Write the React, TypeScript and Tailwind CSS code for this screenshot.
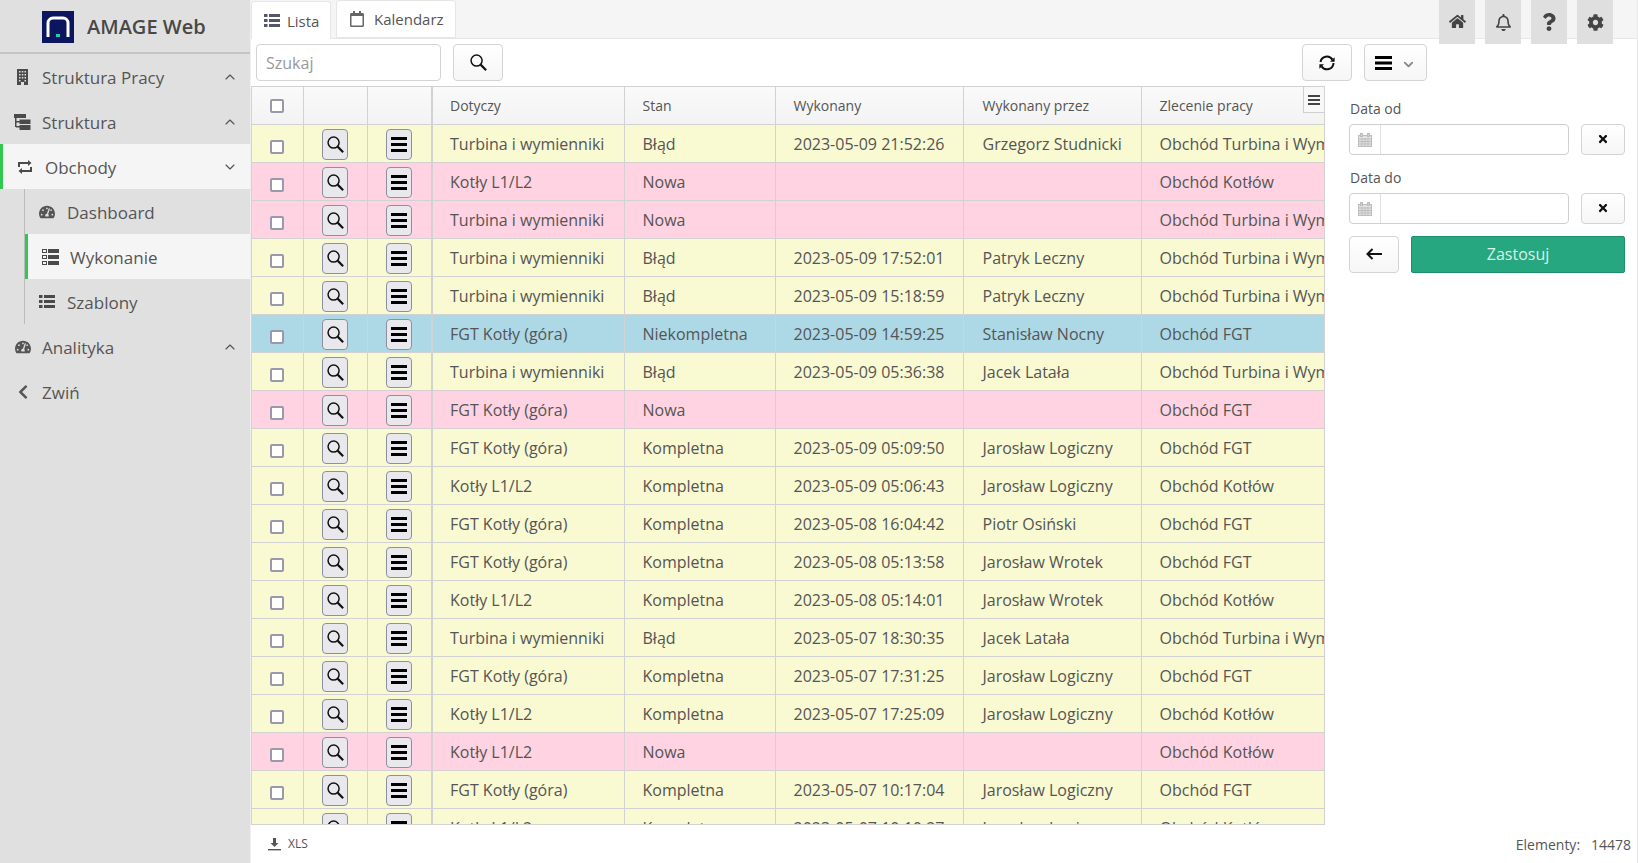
import React from 'react';
import {
  FaChevronLeft,
  FaCog,
  FaHome,
  FaQuestion,
  FaRegBell,
  FaRegCalendar,
  FaTachometerAlt,
  FaTimes,
} from 'react-icons/fa';
import { LuChevronUp, LuChevronDown } from 'react-icons/lu';

type Row = [string, string, string, string, string, 'y' | 'p' | 'b'];

const TURB = 'Obchód Turbina i Wymienniki';
const KOT = 'Obchód Kotłów';
const FGT = 'Obchód FGT';

const rows: Row[] = [
  ['Turbina i wymienniki', 'Błąd', '2023-05-09 21:52:26', 'Grzegorz Studnicki', TURB, 'y'],
  ['Kotły L1/L2', 'Nowa', '', '', KOT, 'p'],
  ['Turbina i wymienniki', 'Nowa', '', '', TURB, 'p'],
  ['Turbina i wymienniki', 'Błąd', '2023-05-09 17:52:01', 'Patryk Leczny', TURB, 'y'],
  ['Turbina i wymienniki', 'Błąd', '2023-05-09 15:18:59', 'Patryk Leczny', TURB, 'y'],
  ['FGT Kotły (góra)', 'Niekompletna', '2023-05-09 14:59:25', 'Stanisław Nocny', FGT, 'b'],
  ['Turbina i wymienniki', 'Błąd', '2023-05-09 05:36:38', 'Jacek Latała', TURB, 'y'],
  ['FGT Kotły (góra)', 'Nowa', '', '', FGT, 'p'],
  ['FGT Kotły (góra)', 'Kompletna', '2023-05-09 05:09:50', 'Jarosław Logiczny', FGT, 'y'],
  ['Kotły L1/L2', 'Kompletna', '2023-05-09 05:06:43', 'Jarosław Logiczny', KOT, 'y'],
  ['FGT Kotły (góra)', 'Kompletna', '2023-05-08 16:04:42', 'Piotr Osiński', FGT, 'y'],
  ['FGT Kotły (góra)', 'Kompletna', '2023-05-08 05:13:58', 'Jarosław Wrotek', FGT, 'y'],
  ['Kotły L1/L2', 'Kompletna', '2023-05-08 05:14:01', 'Jarosław Wrotek', KOT, 'y'],
  ['Turbina i wymienniki', 'Błąd', '2023-05-07 18:30:35', 'Jacek Latała', TURB, 'y'],
  ['FGT Kotły (góra)', 'Kompletna', '2023-05-07 17:31:25', 'Jarosław Logiczny', FGT, 'y'],
  ['Kotły L1/L2', 'Kompletna', '2023-05-07 17:25:09', 'Jarosław Logiczny', KOT, 'y'],
  ['Kotły L1/L2', 'Nowa', '', '', KOT, 'p'],
  ['FGT Kotły (góra)', 'Kompletna', '2023-05-07 10:17:04', 'Jarosław Logiczny', FGT, 'y'],
  ['Kotły L1/L2', 'Kompletna', '2023-05-07 10:10:27', 'Jarosław Logiczny', KOT, 'y'],
];

const rowBg = { y: 'bg-[#f9f9d2]', p: 'bg-[#ffd3e1]', b: 'bg-[#add8e6]' };

const Logo = () => (
  <svg width="32" height="32" viewBox="0 0 32 32">
    <rect width="32" height="32" fill="#0c1560" />
    <path d="M6 26V12a5 5 0 0 1 5-5h10a5 5 0 0 1 5 5v14" fill="none" stroke="#fff" strokeWidth="3" />
    <rect x="14" y="23" width="4" height="3" fill="#1fd0a8" />
  </svg>
);

const Building = () => (
  <svg width="11" height="16" viewBox="0 0 11 16" fill="#4a4a4a">
    <path
      fillRule="evenodd"
      d="M0 0h11v16H7v-3H4v3H0zM2 2v1.5h1.5V2zM4.8 2v1.5h1.5V2zM7.5 2v1.5H9V2zM2 5v1.5h1.5V5zM4.8 5v1.5h1.5V5zM7.5 5v1.5H9V5zM2 8v1.5h1.5V8zM4.8 8v1.5h1.5V8zM7.5 8v1.5H9V8zM2 11v1.5h1.5V11zM7.5 11v1.5H9V11z"
    />
  </svg>
);

const Tree = () => (
  <svg width="17" height="16" viewBox="0 0 17 16" fill="#4a4a4a">
    <rect x="0" y="0" width="12" height="4" />
    <rect x="1" y="4" width="1.5" height="9" />
    <rect x="2" y="7" width="4" height="1.5" />
    <rect x="2" y="12" width="4" height="1.5" />
    <rect x="5.5" y="5.5" width="11" height="4.5" />
    <rect x="5.5" y="11" width="11" height="5" />
  </svg>
);

const Loop = () => (
  <svg width="16" height="14" viewBox="0 0 16 14" fill="#4a4a4a">
    <path d="M2 7V3h10M14 7v4H4" fill="none" stroke="#4a4a4a" strokeWidth="2" />
    <path d="M11 0l3.5 3L11 6zM5 8l-3.5 3L5 14z" />
  </svg>
);

const Tasks = () => (
  <svg width="17" height="16" viewBox="0 0 17 16" fill="#4a4a4a">
    <path d="M0 0h5v4H0zM1 1v2h3V1z" fillRule="evenodd" />
    <path d="M0 6h5v4H0zM1 7v2h3V7z" fillRule="evenodd" />
    <path d="M0 12h5v4H0zM1 13v2h3v-2z" fillRule="evenodd" />
    <rect x="6" y="0" width="11" height="4" />
    <rect x="6" y="6" width="11" height="4" />
    <rect x="6" y="12" width="11" height="4" />
  </svg>
);

const ListIcon = ({ color = '#4a4a4a' }: { color?: string }) => (
  <svg width="16" height="13" viewBox="0 0 16 13" fill={color}>
    <rect x="0" y="0" width="3.5" height="3" />
    <rect x="0" y="5" width="3.5" height="3" />
    <rect x="0" y="10" width="3.5" height="3" />
    <rect x="5" y="0" width="11" height="3" />
    <rect x="5" y="5" width="11" height="3" />
    <rect x="5" y="10" width="11" height="3" />
  </svg>
);

const Bars = ({ w = 16, bar = 3, gap = 3, color = '#000' }: { w?: number; bar?: number; gap?: number; color?: string }) => (
  <svg width={w} height={bar * 3 + gap * 2} fill={color}>
    <rect width={w} height={bar} />
    <rect y={bar + gap} width={w} height={bar} />
    <rect y={(bar + gap) * 2} width={w} height={bar} />
  </svg>
);

const Search = ({ size = 17, width = 1.4 }: { size?: number; width?: number }) => (
  <svg width={size} height={size} viewBox="0 0 16 16" fill="none" stroke="#111" strokeWidth={width}>
    <circle cx="6.2" cy="6.2" r="5.2" />
    <path d="M10 10L15.2 15.2" strokeWidth={width + 0.6} />
  </svg>
);

const Refresh = () => (
  <svg width="16" height="16" viewBox="0 0 16 16" fill="#111">
    <path d="M1.5 7A6.5 6.5 0 0 1 13.4 4.6" fill="none" stroke="#111" strokeWidth="2" />
    <path d="M14.5 8A6.5 6.5 0 0 1 2.6 11.4" fill="none" stroke="#111" strokeWidth="2" />
    <path d="M15.6 2.2V6.8H11z" />
    <path d="M0.4 13.8V9.2H5z" />
  </svg>
);

const ArrowLeft = () => (
  <svg width="16" height="12" viewBox="0 0 16 12" fill="none" stroke="#111" strokeWidth="2">
    <path d="M2 6h14M6.5 1L1.5 6l5 5" />
  </svg>
);

const Calendar = () => (
  <svg width="14" height="14" viewBox="0 0 14 14" fill="none" stroke="#bdbdbd" strokeWidth="1">
    <rect x="0.5" y="2.5" width="13" height="11" fill="#e2e2e2" />
    <path d="M0.5 6h13M0.5 8.5h13M0.5 11h13M4 5v8M7 5v8M10 5v8" />
    <rect x="2.5" y="0.5" width="2" height="3" fill="#cfcfcf" />
    <rect x="9.5" y="0.5" width="2" height="3" fill="#cfcfcf" />
  </svg>
);

const Download = () => (
  <svg width="13" height="13" viewBox="0 0 13 13" fill="#555">
    <path d="M5 0h3v5h2.5l-4 4-4-4H5z" />
    <rect y="11" width="13" height="1.4" />
  </svg>
);

const NativeBox = () => (
  <span className="block w-[14px] h-[14px] border-2 border-[#9a98ab] rounded-[2px] bg-white mx-auto" />
);

const IconBtn = ({ children }: { children: React.ReactNode }) => (
  <button className="w-[26px] h-[31px] bg-[#e9e9ed] border border-[#8f8f9d] rounded-[4px] flex items-center justify-center mx-auto">
    {children}
  </button>
);

const Btn = ({ className, children }: { className: string; children: React.ReactNode }) => (
  <button className={`flex items-center justify-center border border-[#d4d4d4] rounded-[4px] bg-gradient-to-b from-white to-[#f6f6f6] text-[#111] ${className}`}>
    {children}
  </button>
);

const MenuItem = ({
  icon,
  label,
  chevron,
}: {
  icon: React.ReactNode;
  label: string;
  chevron?: 'up';
}) => (
  <div className="h-[45px] flex items-center">
    <span className="w-[42px] flex justify-center pl-[3px] shrink-0">{icon}</span>
    <span className="flex-1 pt-[2px]">{label}</span>
    {chevron && <LuChevronUp size={16} strokeWidth={1.75} className="mr-[12px] text-[#555]" />}
  </div>
);

const SubItem = ({ icon, label, active }: { icon: React.ReactNode; label: string; active?: boolean }) => (
  <div
    className={`h-[45px] flex items-center ${active ? 'bg-[#f5f5f5] border-l-[3px] border-[#32c850] pl-[14px]' : 'pl-[14px]'}`}
  >
    <span className="w-[28px] shrink-0 flex">{icon}</span>
    <span className="pt-[2px]">{label}</span>
  </div>
);

const DateField = ({ label, className }: { label: string; className: string }) => (
  <div className={className}>
    <div className="text-[14px] leading-[20px] mb-[5px] pl-[1px]">{label}</div>
    <div className="flex gap-[12px]">
      <div className="flex-1 h-[31px] border border-[#cfcfcf] rounded-[4px] flex bg-white">
        <span className="w-[31px] border-r border-[#e0e0e0] flex items-center justify-center">
          <Calendar />
        </span>
      </div>
      <Btn className="w-[44px] h-[31px] pb-[2px]">
        <FaTimes size={12} />
      </Btn>
    </div>
  </div>
);

const cellText = 'pr-[18px] whitespace-nowrap overflow-hidden border border-[#d2d2d2]';
// first and fourth data columns sit a pixel off the others in the original grid
const cellPad = ['pl-[17px]', 'pl-[18px]', 'pl-[18px]', 'pl-[19px]', 'pl-[18px]'];

export default function App() {
  return (
    <div className="h-screen flex overflow-hidden bg-white text-[#555] text-[16px] font-['Open_Sans',sans-serif]">
      <aside className="w-[251px] shrink-0 bg-[#e0e0e0] border-r border-[#f0f0f0] text-[17px]">
        <div className="h-[54px] flex items-center pl-[42px] pt-[2px] gap-[13px] border-b-2 border-[#c4c4c4]">
          <Logo />
          <span className="text-[20px] font-semibold text-[#484848]">AMAGE Web</span>
        </div>
        <MenuItem icon={<Building />} label="Struktura Pracy" chevron="up" />
        <MenuItem icon={<Tree />} label="Struktura" chevron="up" />
        <div className="h-[45px] flex items-center bg-[#f5f5f5] border-l-[3px] border-[#32c850]">
          <span className="w-[42px] flex justify-center pl-[1px] shrink-0">
            <Loop />
          </span>
          <span className="flex-1 pt-[2px]">Obchody</span>
          <LuChevronDown size={16} strokeWidth={1.75} className="mr-[12px] text-[#555]" />
        </div>
        <div className="ml-[24px] border-l border-[#bcbcbc]">
          <SubItem icon={<FaTachometerAlt size={16} />} label="Dashboard" />
          <SubItem icon={<Tasks />} label="Wykonanie" active />
          <SubItem icon={<ListIcon />} label="Szablony" />
        </div>
        <MenuItem icon={<FaTachometerAlt size={16} />} label="Analityka" chevron="up" />
        <MenuItem icon={<FaChevronLeft size={16} />} label="Zwiń" />
      </aside>

      <main className="flex-1 min-w-0 flex flex-col border-r border-[#e8e8e8]">
        <div className="h-[39px] shrink-0 bg-[#f5f5f5] border-b border-[#e6e6e6] flex items-end">
          <div className="h-[38px] w-[80px] bg-white border border-b-0 border-[#e6e6e6] rounded-t-[3px] flex items-center pl-[12px] gap-[7px] text-[15px] -mb-px relative">
            <ListIcon color="#555570" />
            <span className="pt-[1px]">Lista</span>
          </div>
          <div className="h-[38px] w-[120px] ml-[5px] bg-white border border-[#e6e6e6] rounded-t-[3px] flex items-center pl-[12px] gap-[9px] text-[15px]">
            <FaRegCalendar size={16} className="text-[#666]" />
            <span className="pt-[1px]">Kalendarz</span>
          </div>
          <div className="ml-auto mr-[24px] self-start flex gap-[10px] text-[#444]">
            <span className="w-[36px] h-[44px] bg-[#dfdfdf] flex items-center justify-center pb-[2px]"><FaHome size={17} /></span>
            <span className="w-[36px] h-[44px] bg-[#dfdfdf] flex items-center justify-center"><FaRegBell size={17} /></span>
            <span className="w-[36px] h-[44px] bg-[#dfdfdf] flex items-center justify-center"><FaQuestion size={18} /></span>
            <span className="w-[36px] h-[44px] bg-[#dfdfdf] flex items-center justify-center"><FaCog size={17} /></span>
          </div>
        </div>

        <div className="shrink-0 flex pt-[5px] pl-[5px] pr-[210px] h-[47px]">
          <input
            placeholder="Szukaj"
            className="w-[185px] h-[37px] border border-[#d4d4d4] rounded-[4px] px-[9px] placeholder:text-[#999] outline-none"
          />
          <Btn className="w-[50px] h-[37px] ml-[12px]">
            <Search />
          </Btn>
          <Btn className="w-[50px] h-[37px] ml-auto">
            <Refresh />
          </Btn>
          <Btn className="w-[63px] h-[37px] ml-[12px] gap-[9px]">
            <Bars w={17} bar={3} gap={2.5} />
            <LuChevronDown size={15} className="text-[#888] mt-[3px]" strokeWidth={3} />
          </Btn>
        </div>

        <div className="flex-1 min-h-0 flex">
          <div className="relative w-[1074px] shrink-0 overflow-hidden border border-[#d2d2d2]">
            <table className="table-fixed w-[1072px] border-collapse border-hidden">
              <colgroup>
                <col className="w-[51px]" />
                <col className="w-[64px]" />
                <col className="w-[65px]" />
                <col className="w-[192px]" />
                <col className="w-[151px]" />
                <col className="w-[188px]" />
                <col className="w-[178px]" />
                <col className="w-[183px]" />
              </colgroup>
              <thead>
                <tr className="h-[37px] bg-gradient-to-b from-[#fafafa] to-[#f3f3f3] text-[14px]">
                  <th className="border border-[#d2d2d2] font-normal pt-[2px]">
                    <NativeBox />
                  </th>
                  <th className="border border-[#d2d2d2]" />
                  <th className="border border-[#d2d2d2] border-r-2" />
                  {['Dotyczy', 'Stan', 'Wykonany', 'Wykonany przez', 'Zlecenie pracy'].map((h, j) => (
                    <th key={h} className={`${cellText} ${cellPad[j]} font-normal text-left pt-[1px]`}>
                      {h}
                    </th>
                  ))}
                </tr>
              </thead>
              <tbody>
                {rows.map((r, i) => (
                  <tr key={i} className={`h-[38px] ${rowBg[r[5]]}`}>
                    <td className="border border-[#d2d2d2] pt-[7px]">
                      <NativeBox />
                    </td>
                    <td className="border border-[#d2d2d2] pt-[3px]">
                      <IconBtn>
                        <Search />
                      </IconBtn>
                    </td>
                    <td className="border border-[#d2d2d2] border-r-2 pt-[3px] pr-[1px]">
                      <IconBtn>
                        <Bars />
                      </IconBtn>
                    </td>
                    {r.slice(0, 5).map((c, j) => (
                      <td key={j} className={`${cellText} ${cellPad[j]} pt-[1px]`}>
                        {c}
                      </td>
                    ))}
                  </tr>
                ))}
              </tbody>
            </table>
            <span className="absolute right-0 top-0 w-[21px] h-[26px] bg-[#f8f8f8] border-l border-b border-[#cfcfcf] flex items-center justify-center">
              <Bars w={12} bar={2} gap={2} color="#444" />
            </span>
          </div>

          <div className="w-[276px] ml-[24px] pt-[13px] shrink-0">
            <DateField label="Data od" className="mb-[13px]" />
            <DateField label="Data do" className="mb-[12px]" />
            <div className="flex gap-[12px]">
              <Btn className="w-[50px] h-[37px] pb-[2px]">
                <ArrowLeft />
              </Btn>
              <button className="flex-1 h-[37px] rounded-[2px] bg-[#27a780] border border-[#1e8f6c] text-[#d9f1e9] pb-[2px]">
                Zastosuj
              </button>
            </div>
          </div>
        </div>

        <div className="h-[38px] shrink-0 flex items-center pl-[17px] pr-[6px] text-[12px]">
          <Download />
          <span className="ml-[7px]">XLS</span>
          <span className="ml-auto text-[14px] mt-[1px]">Elementy:&nbsp;&nbsp;&nbsp;14478</span>
        </div>
      </main>
    </div>
  );
}
